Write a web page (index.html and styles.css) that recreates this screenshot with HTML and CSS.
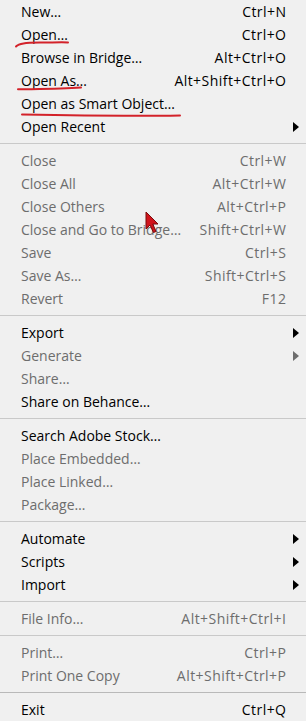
FILE: index.html
```html
<!DOCTYPE html>
<html lang="en">
<head>
    <meta charset="UTF-8">
    <meta name="viewport" content="width=device-width, initial-scale=1.0">
    <title>File menu</title>
    <link rel="stylesheet" href="styles.css">
</head>
<body>
    <div class="menu">
        <div class="item"><span class="label">New…</span><span class="key">Ctrl+N</span></div>
        <div class="item"><span class="label">Open…</span><span class="key">Ctrl+O</span></div>
        <div class="item"><span class="label">Browse in Bridge…</span><span class="key">Alt+Ctrl+O</span></div>
        <div class="item"><span class="label">Open As…</span><span class="key">Alt+Shift+Ctrl+O</span></div>
        <div class="item"><span class="label">Open as Smart Object…</span><span class="key"></span></div>
        <div class="item"><span class="label">Open Recent</span><span class="key"></span><span class="arrow"></span></div>
        <div class="sep"></div>
        <div class="item off"><span class="label">Close</span><span class="key">Ctrl+W</span></div>
        <div class="item off"><span class="label">Close All</span><span class="key">Alt+Ctrl+W</span></div>
        <div class="item off"><span class="label">Close Others</span><span class="key">Alt+Ctrl+P</span></div>
        <div class="item off"><span class="label">Close and Go to Bridge…</span><span class="key">Shift+Ctrl+W</span></div>
        <div class="item off"><span class="label">Save</span><span class="key">Ctrl+S</span></div>
        <div class="item off"><span class="label">Save As…</span><span class="key">Shift+Ctrl+S</span></div>
        <div class="item off"><span class="label">Revert</span><span class="key">F12</span></div>
        <div class="sep"></div>
        <div class="item"><span class="label">Export</span><span class="key"></span><span class="arrow"></span></div>
        <div class="item off"><span class="label">Generate</span><span class="key"></span><span class="arrow"></span></div>
        <div class="item off"><span class="label">Share…</span><span class="key"></span></div>
        <div class="item"><span class="label">Share on Behance…</span><span class="key"></span></div>
        <div class="sep"></div>
        <div class="item"><span class="label">Search Adobe Stock…</span><span class="key"></span></div>
        <div class="item off"><span class="label">Place Embedded…</span><span class="key"></span></div>
        <div class="item off"><span class="label">Place Linked…</span><span class="key"></span></div>
        <div class="item off"><span class="label">Package…</span><span class="key"></span></div>
        <div class="sep"></div>
        <div class="item"><span class="label">Automate</span><span class="key"></span><span class="arrow"></span></div>
        <div class="item"><span class="label">Scripts</span><span class="key"></span><span class="arrow"></span></div>
        <div class="item"><span class="label">Import</span><span class="key"></span><span class="arrow"></span></div>
        <div class="sep"></div>
        <div class="item off"><span class="label">File Info…</span><span class="key">Alt+Shift+Ctrl+I</span></div>
        <div class="sep"></div>
        <div class="item off"><span class="label">Print…</span><span class="key">Ctrl+P</span></div>
        <div class="item off"><span class="label">Print One Copy</span><span class="key">Alt+Shift+Ctrl+P</span></div>
        <div class="sep dark"></div>
        <div class="item"><span class="label">Exit</span><span class="key">Ctrl+Q</span></div>

        <!-- hand-drawn marks on top of the screenshot -->
        <svg class="marks" width="306" height="721" viewBox="0 0 306 721">
            <path d="M16 46.5 C19 43.2 25 42.8 40 42.6 S62 42 68 42.4" />
            <path d="M18 89.3 C35 89 60 89.2 81 87.6" />
            <path d="M22 114.6 C80 115.6 150 116 180 115.4" />
        </svg>
        <svg class="cursor" width="16" height="24" viewBox="0 0 16 24">
            <polygon points="1,1 1,18 5,14 8.5,21.5 11,20.5 7.8,13 13,13" />
        </svg>
    </div>
</body>
</html>
```

FILE: styles.css
```css
* {
    margin: 0;
    padding: 0;
    box-sizing: border-box;
}
body {
    font-family: "Open Sans", "Noto Sans", Arial, sans-serif;
    font-size: 14px;
    background-color: #f0f0f0;
    color: #000;
}
.menu {
    position: relative;
    width: 306px;
    height: 721px;
    overflow: hidden;
}
.item {
    display: grid;
    grid-template-columns: 1fr auto 20px;
    align-items: center;
    height: 23px;
    padding-left: 21px;
    white-space: nowrap;
}
.item.off {
    color: #6d6d6d;
}
.key {
    text-align: right;
    letter-spacing: 0.45px;
    margin-right: -0.45px;
}
.arrow {
    justify-self: start;
    margin-left: 7px;
    width: 0;
    height: 0;
    border-top: 5px solid transparent;
    border-bottom: 5px solid transparent;
    border-left: 6px solid #000;
}
.item.off .arrow {
    border-left-color: #6d6d6d;
}
.sep {
    height: 1px;
    margin: 5px 0;
    background-color: #c9c9c9;
}
.sep.dark {
    background-color: #b9b9b9;
}
.marks {
    position: absolute;
    left: 0;
    top: 0;
    pointer-events: none;
}
.marks path {
    fill: none;
    stroke: #d3222a;
    stroke-width: 2;
    stroke-linecap: round;
}
.cursor {
    position: absolute;
    left: 145px;
    top: 211px;
    pointer-events: none;
}
.cursor polygon {
    fill: #d0141c;
    stroke: #7a0a0a;
    stroke-width: 1;
    stroke-linejoin: round;
}
```
